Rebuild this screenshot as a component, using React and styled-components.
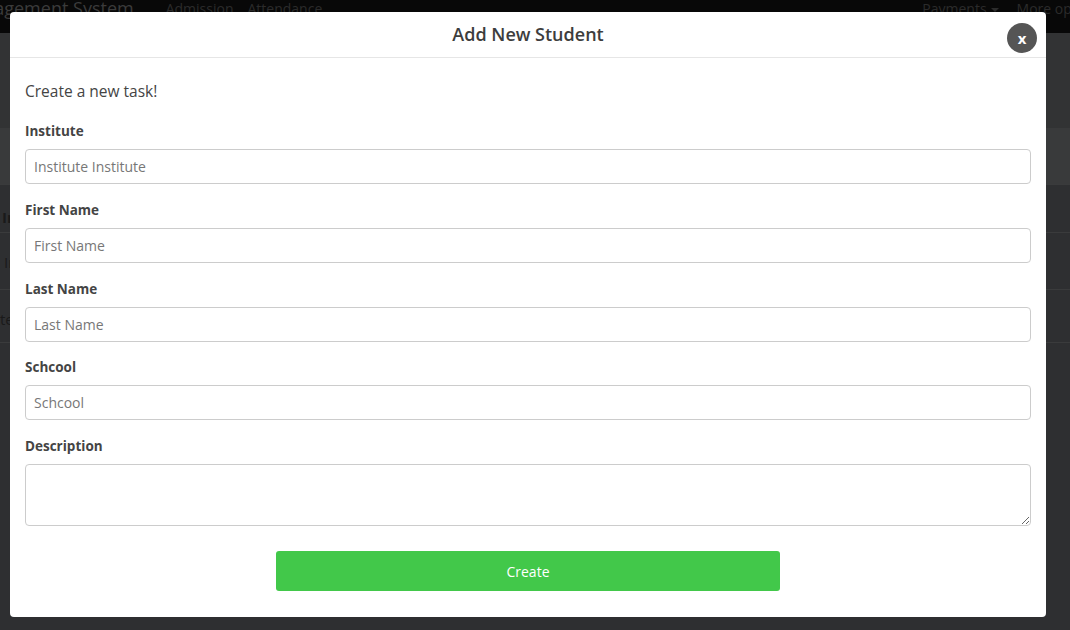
import React from "react";
import styled, { createGlobalStyle } from "styled-components";

const Global = createGlobalStyle`
  html, body { margin: 0; padding: 0; }
  body {
    background: #2e2f31;
    font-family: "Open Sans", "Noto Sans", sans-serif;
    overflow: hidden;
    width: 1070px;
    height: 630px;
  }
  * { box-sizing: border-box; }
`;

const Page = styled.div`
  width: 1070px;
  height: 630px;
  display: flex;
  flex-direction: column;
  background: #2e2f31;
  overflow: hidden;
`;

const Navbar = styled.div`
  height: 33px;
  background: #080808;
  display: flex;
  align-items: flex-start;
  flex-shrink: 0;
  overflow: hidden;
`;

const Brand = styled.div`
  font-size: 18px;
  line-height: 17px;
  color: #3b3b3b;
  margin-left: -43px;
  white-space: nowrap;
  margin-right: 32px;
`;

const NavLink = styled.div`
  font-size: 14px;
  line-height: 17px;
  color: #2b2b2b;
  white-space: nowrap;
  margin-right: ${(p) => p.$mr || 14}px;
`;

const Caret = styled.span`
  display: inline-block;
  margin-left: 4px;
  border-left: 4px solid transparent;
  border-right: 4px solid transparent;
  border-top: 4px solid #2b2b2b;
  vertical-align: middle;
`;

const SubBar = styled.div`
  height: 95px;
  background: #323334;
  flex-shrink: 0;
`;

const Band = styled.div`
  height: 56px;
  background: #393a3b;
  flex-shrink: 0;
`;

const Table = styled.div`
  display: flex;
  flex-direction: column;
`;

const Row = styled.div`
  height: ${(p) => p.$h}px;
  border-top: 1px solid #3a3b3c;
  padding-top: ${(p) => p.$pt || 0}px;
  padding-left: ${(p) => p.$pl || 0}px;
  font-size: 15px;
  line-height: 20px;
  font-weight: ${(p) => (p.$bold ? 700 : 400)};
  color: #1a1a1a;
  white-space: nowrap;
`;

const Backdrop = styled.div`
  position: fixed;
  inset: 0;
`;

const Modal = styled.div`
  position: absolute;
  left: 10px;
  top: 12px;
  width: 1036px;
  height: 605px;
  background: #ffffff;
  border-radius: 4px;
  display: flex;
  flex-direction: column;
`;

const Header = styled.div`
  height: 46px;
  border-bottom: 1px solid #e6e6e6;
  display: flex;
  align-items: center;
  justify-content: center;
  padding-bottom: 1px;
`;

const Title = styled.h4`
  margin: 0;
  font-size: 18px;
  font-weight: 600;
  color: #3d3d3d;
`;

const CloseButton = styled.button`
  position: absolute;
  right: 9px;
  top: 11px;
  width: 30px;
  height: 30px;
  border-radius: 50%;
  border: none;
  background: #555555;
  color: #ffffff;
  font-family: "Open Sans", sans-serif;
  font-weight: 700;
  font-size: 15px;
  line-height: 28px;
  padding: 0;
  display: flex;
  align-items: center;
  justify-content: center;
  cursor: pointer;
`;

const Body = styled.div`
  padding: 22px 15px 0;
  display: flex;
  flex-direction: column;
`;

const Intro = styled.p`
  margin: 0 0 18px;
  font-size: 15.5px;
  line-height: 22px;
  color: #444;
`;

const Field = styled.div`
  display: flex;
  flex-direction: column;
  margin-bottom: ${(p) => p.$mb ?? 15}px;
`;

const Label = styled.label`
  font-size: 13.5px;
  line-height: 20px;
  font-weight: 700;
  color: #444;
  margin-top: 1px;
  margin-bottom: 8px;
`;

const Input = styled.input`
  height: 35px;
  width: 100%;
  border: 1px solid #cccccc;
  border-radius: 4px;
  padding: 0 8px;
  font-family: "Open Sans", sans-serif;
  font-size: 14px;
  color: #555;
  &::placeholder { color: #777; }
`;

const TextArea = styled.textarea`
  height: 62px;
  width: 100%;
  border: 1px solid #cccccc;
  border-radius: 4px;
  padding: 6px 8px;
  font-family: "Open Sans", sans-serif;
  font-size: 14px;
  display: block;
`;

const Actions = styled.div`
  display: flex;
  justify-content: center;
  margin-top: 25px;
`;

const CreateButton = styled.button`
  width: 504px;
  height: 40px;
  border: none;
  border-radius: 3px;
  background: #42c84a;
  color: #ffffff;
  font-family: "Open Sans", sans-serif;
  font-size: 14px;
  cursor: pointer;
`;

const fields = [
  { label: "Institute", placeholder: "Institute Institute", mb: 15 },
  { label: "First Name", placeholder: "First Name", mb: 15 },
  { label: "Last Name", placeholder: "Last Name", mb: 14 },
  { label: "Schcool", placeholder: "Schcool", mb: 15 },
];

export default function App() {
  return (
    <>
      <Global />
      <Page>
        <Navbar>
          <Brand>Management System</Brand>
          <NavLink>Admission</NavLink>
          <NavLink $mr={600}>Attendance</NavLink>
          <NavLink $mr={18}>
            Payments<Caret />
          </NavLink>
          <NavLink>More options</NavLink>
        </Navbar>
        <SubBar />
        <Band />
        <Table>
          <Row $h={48} $pt={22} $bold $pl={2}>In</Row>
          <Row $h={57} $pt={19} $pl={4}>In</Row>
          <Row $h={53} $pt={19} $pl={0}>te</Row>
          <Row $h={20} />
        </Table>
      </Page>
      <Backdrop>
        <Modal>
          <Header>
            <Title>Add New Student</Title>
          </Header>
          <CloseButton>x</CloseButton>
          <Body>
            <Intro>Create a new task!</Intro>
            {fields.map((f) => (
              <Field key={f.label} $mb={f.mb}>
                <Label>{f.label}</Label>
                <Input placeholder={f.placeholder} />
              </Field>
            ))}
            <Field $mb={0}>
              <Label>Description</Label>
              <TextArea />
            </Field>
            <Actions>
              <CreateButton>Create</CreateButton>
            </Actions>
          </Body>
        </Modal>
      </Backdrop>
    </>
  );
}
